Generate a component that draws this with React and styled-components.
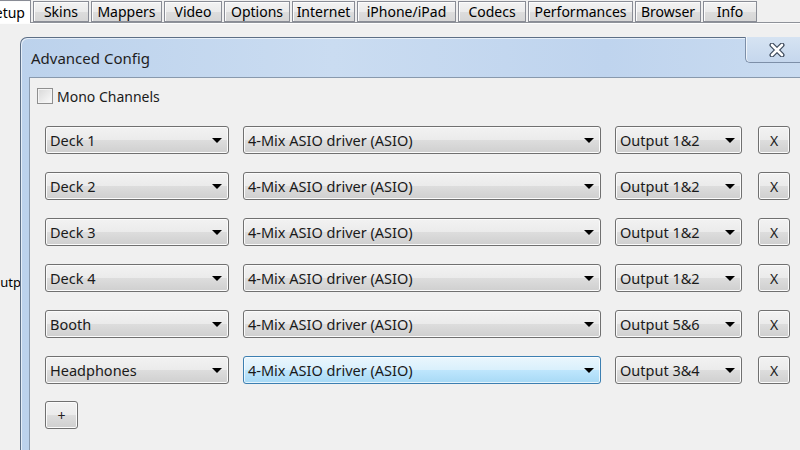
import React from 'react'
import styled, { createGlobalStyle } from 'styled-components'

const GlobalStyle = createGlobalStyle`
	html, body {
		margin: 0;
		padding: 0;
		background: #f0f0f0;
	}
	body {
		font-family: "Noto Sans", "Open Sans", sans-serif;
		color: #1a1a1a;
	}
`

const Screen = styled.div`
	width: 800px;
	height: 450px;
	overflow: hidden;
	display: flex;
	flex-direction: column;
	background: #f0f0f0;
`

const TabBar = styled.div`
	display: flex;
	align-items: flex-end;
	height: 23px;
	border-bottom: 1px solid #8e9299;
	box-sizing: border-box;
	flex-shrink: 0;
`

const Tab = styled.div`
	width: ${(p) => p.$w}px;
	height: ${(p) => (p.$active ? 23 : 21)}px;
	box-sizing: border-box;
	display: flex;
	align-items: center;
	justify-content: center;
	margin-left: ${(p) => (p.$first ? '-19px' : '2px')};
	margin-bottom: ${(p) => (p.$active ? '-1px' : '0')};
	font-size: 14px;
	white-space: nowrap;
	border: 1px solid #898c95;
	border-bottom: ${(p) => (p.$active ? 'none' : '1px solid #898c95')};
	background: ${(p) =>
		p.$active ? '#ffffff' : 'linear-gradient(#f3f3f3, #ebebeb 50%, #dddddd 51%, #d6d6d6)'};
	box-shadow: inset 1px 1px 0 #fcfcfc;
	color: #000;
`

const Body = styled.div`
	flex: 1;
	display: flex;
	min-height: 0;
	border-top: 1px solid #fdfdfd;
`

const BehindStrip = styled.div`
	width: 20px;
	flex-shrink: 0;
	overflow: hidden;
	padding-top: 249px;
	box-sizing: border-box;
`

const BehindLabel = styled.div`
	margin-left: -10px;
	font-size: 13px;
	white-space: nowrap;
	color: #000;
`

const Dialog = styled.div`
	flex: 1;
	margin-top: 13px;
	border: 1px solid #5d6f86;
	border-right: none;
	border-bottom: none;
	border-top-left-radius: 7px;
	background: linear-gradient(to right, #bcd2ec, #cadcf1 40%, #bfd4ee 75%, #c9dbf0);
	display: flex;
	flex-direction: column;
	min-width: 0;
	box-shadow: inset 1px 1px 0 rgba(255, 255, 255, 0.6);
`

const TitleBar = styled.div`
	height: 39px;
	display: flex;
	align-items: flex-start;
	justify-content: space-between;
	flex-shrink: 0;
`

const Title = styled.div`
	font-size: 15px;
	padding: 10px 0 0 10px;
	color: #1e1e1e;
`

const CloseButton = styled.div`
	width: 55px;
	height: 26px;
	margin-top: -1px;
	box-sizing: border-box;
	border: 1px solid #7d8fa8;
	border-right: none;
	border-top: none;
	border-bottom-left-radius: 5px;
	background: linear-gradient(#d6e3f2, #c5d7ed);
	box-shadow: inset 1px 0 0 rgba(255, 255, 255, 0.7);
	display: flex;
	align-items: center;
	justify-content: center;
	padding-left: 8px;
`

const Client = styled.div`
	flex: 1;
	margin-left: 8px;
	border: 1px solid #8899ad;
	border-right: none;
	border-bottom: none;
	background: #f0f0f0;
	padding: 9px 0 0 7px;
	display: flex;
	flex-direction: column;
`

const CheckRow = styled.label`
	display: flex;
	align-items: center;
	gap: 4px;
	font-size: 14px;
	height: 18px;
`

const CheckBox = styled.span`
	width: 14px;
	height: 14px;
	border: 1px solid #8f8f8f;
	background: linear-gradient(135deg, #d8d8d8, #fbfbfb);
	box-shadow: inset 0 0 0 1px #f4f4f4;
`

const Rows = styled.div`
	display: flex;
	flex-direction: column;
	gap: 18px;
	margin-top: 21px;
	padding-left: 8px;
`

const Row = styled.div`
	display: flex;
	align-items: center;
`

const Select = styled.div`
	width: ${(p) => p.$w}px;
	height: 28px;
	box-sizing: border-box;
	margin-right: ${(p) => p.$gap}px;
	border: 1px solid ${(p) => (p.$hot ? '#3c7fb1' : '#707070')};
	border-radius: 3px;
	background: ${(p) =>
		p.$hot
			? 'linear-gradient(#eaf6fd, #d9f0fc 50%, #bee6fd 51%, #a7d9f5)'
			: 'linear-gradient(#f2f2f2, #ebebeb 50%, #dddddd 51%, #cfcfcf)'};
	box-shadow: inset 0 0 0 1px ${(p) => (p.$hot ? 'rgba(255,255,255,0.7)' : '#fbfbfb')};
	display: flex;
	align-items: center;
	justify-content: space-between;
	padding: 0 6px 0 4px;
	font-size: 14.5px;
	white-space: nowrap;
`

const Arrow = styled.span`
	width: 0;
	height: 0;
	border-left: 5px solid transparent;
	border-right: 5px solid transparent;
	border-top: 5px solid #000;
`

const Button = styled.div`
	width: ${(p) => p.$w}px;
	height: 28px;
	box-sizing: border-box;
	border: 1px solid #707070;
	border-radius: 3px;
	background: linear-gradient(#f2f2f2, #ebebeb 50%, #dddddd 51%, #cfcfcf);
	box-shadow: inset 0 0 0 1px #fbfbfb;
	display: flex;
	align-items: center;
	justify-content: center;
	font-size: 14px;
	color: #222;
`

const AddButton = styled(Button)`
	margin-top: 17px;
	margin-left: 8px;
`

const tabs = [
	{ label: 'Setup', w: 50 },
	{ label: 'Skins', w: 56 },
	{ label: 'Mappers', w: 71 },
	{ label: 'Video', w: 58 },
	{ label: 'Options', w: 66 },
	{ label: 'Internet', w: 63 },
	{ label: 'iPhone/iPad', w: 99 },
	{ label: 'Codecs', w: 68 },
	{ label: 'Performances', w: 105 },
	{ label: 'Browser', w: 66 },
	{ label: 'Info', w: 54 },
]

const rows = [
	{ src: 'Deck 1', out: 'Output 1&2' },
	{ src: 'Deck 2', out: 'Output 1&2' },
	{ src: 'Deck 3', out: 'Output 1&2' },
	{ src: 'Deck 4', out: 'Output 1&2' },
	{ src: 'Booth', out: 'Output 5&6' },
	{ src: 'Headphones', out: 'Output 3&4', hot: true },
]

function CloseGlyph() {
	return (
		<svg width="18" height="14" viewBox="0 0 18 14">
			<path d="M4 2 L14 12 M14 2 L4 12" stroke="#3d4a5c" strokeWidth="5" strokeLinecap="round" />
			<path d="M4 2 L14 12 M14 2 L4 12" stroke="#ffffff" strokeWidth="2.6" strokeLinecap="round" />
		</svg>
	)
}

export default function App() {
	return (
		<Screen>
			<GlobalStyle />
			<TabBar>
				{tabs.map((t, i) => (
					<Tab key={t.label} $w={t.w} $first={i === 0} $active={i === 0}>
						{t.label}
					</Tab>
				))}
			</TabBar>
			<Body>
				<BehindStrip>
					<BehindLabel>Output</BehindLabel>
				</BehindStrip>
				<Dialog>
					<TitleBar>
						<Title>Advanced Config</Title>
						<CloseButton>
							<CloseGlyph />
						</CloseButton>
					</TitleBar>
					<Client>
						<CheckRow>
							<CheckBox />
							Mono Channels
						</CheckRow>
						<Rows>
							{rows.map((r) => (
								<Row key={r.src}>
									<Select $w={184} $gap={14}>
										{r.src}
										<Arrow />
									</Select>
									<Select $w={358} $gap={14} $hot={r.hot}>
										4-Mix ASIO driver (ASIO)
										<Arrow />
									</Select>
									<Select $w={127} $gap={16}>
										{r.out}
										<Arrow />
									</Select>
									<Button $w={32}>X</Button>
								</Row>
							))}
						</Rows>
						<AddButton $w={33}>+</AddButton>
					</Client>
				</Dialog>
			</Body>
		</Screen>
	)
}
